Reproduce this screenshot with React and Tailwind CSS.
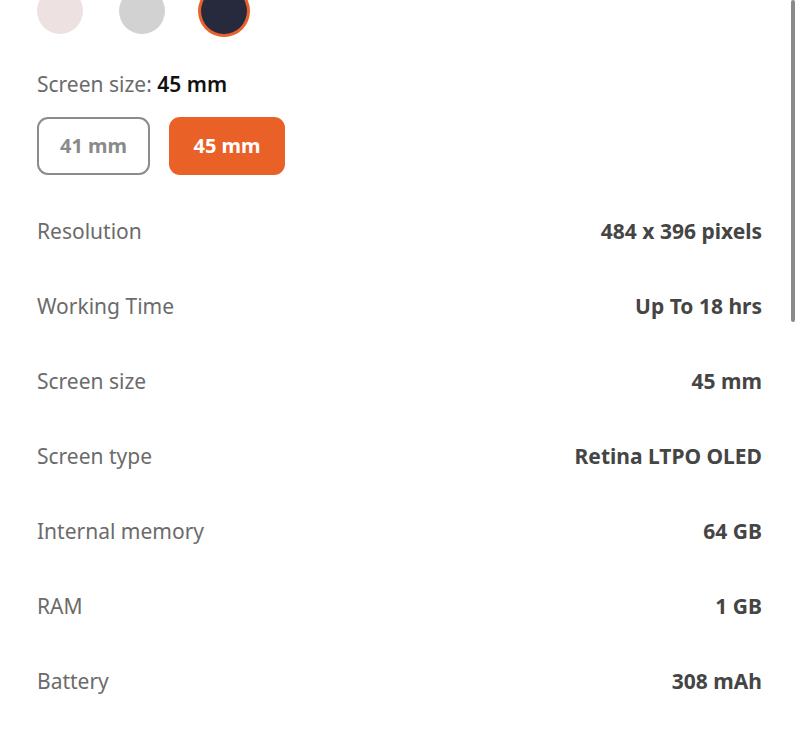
export default function App() {
  const specs = [
    { label: "Resolution", value: "484 x 396 pixels" },
    { label: "Working Time", value: "Up To 18 hrs" },
    { label: "Screen size", value: "45 mm" },
    { label: "Screen type", value: "Retina LTPO OLED" },
    { label: "Internal memory", value: "64 GB" },
    { label: "RAM", value: "1 GB" },
    { label: "Battery", value: "308 mAh" },
  ];

  return (
    <div className="relative h-[731px] w-[800px] overflow-hidden bg-white font-['Noto_Sans',sans-serif]">
      <div className="pl-[37px] pr-[38px]">
        {/* Colour swatches */}
        <div className="-mt-[12px] flex gap-[36px]">
          <div className="h-[46px] w-[46px] rounded-full bg-[#ede1e1]" />
          <div className="h-[46px] w-[46px] rounded-full bg-[#d2d2d2]" />
          <div className="h-[46px] w-[46px] rounded-full bg-[#272a3c] ring-[3px] ring-[#e9622c]" />
        </div>

        {/* Screen size selector */}
        <div className="mt-[36px] flex h-[30px] items-center text-[21px] text-[#6b6b6b]">
          Screen size:&nbsp;<span className="font-semibold text-[#111]">45 mm</span>
        </div>
        <div className="mt-[17px] flex gap-[19px]">
          <button className="flex h-[58px] w-[113px] items-center justify-center rounded-[11px] border-2 border-[#8c8c8c] bg-white text-[20px] font-bold text-[#8a8a8a]">
            41 mm
          </button>
          <button className="flex h-[58px] w-[116px] items-center justify-center rounded-[11px] bg-[#ea6128] text-[20px] font-bold text-white">
            45 mm
          </button>
        </div>

        {/* Specs */}
        <div className="mt-[19px]">
          {specs.map((s) => (
            <div key={s.label} className="flex h-[75px] items-center justify-between">
              <span className="text-[21px] text-[#6b6b6b]">{s.label}</span>
              <span className="text-[21px] font-bold text-[#454545]">{s.value}</span>
            </div>
          ))}
        </div>
      </div>

      {/* Scrollbar */}
      <div className="absolute right-[5px] top-0 h-[322px] w-[4px] rounded-full bg-[#8a8a8a]" />
    </div>
  );
}
